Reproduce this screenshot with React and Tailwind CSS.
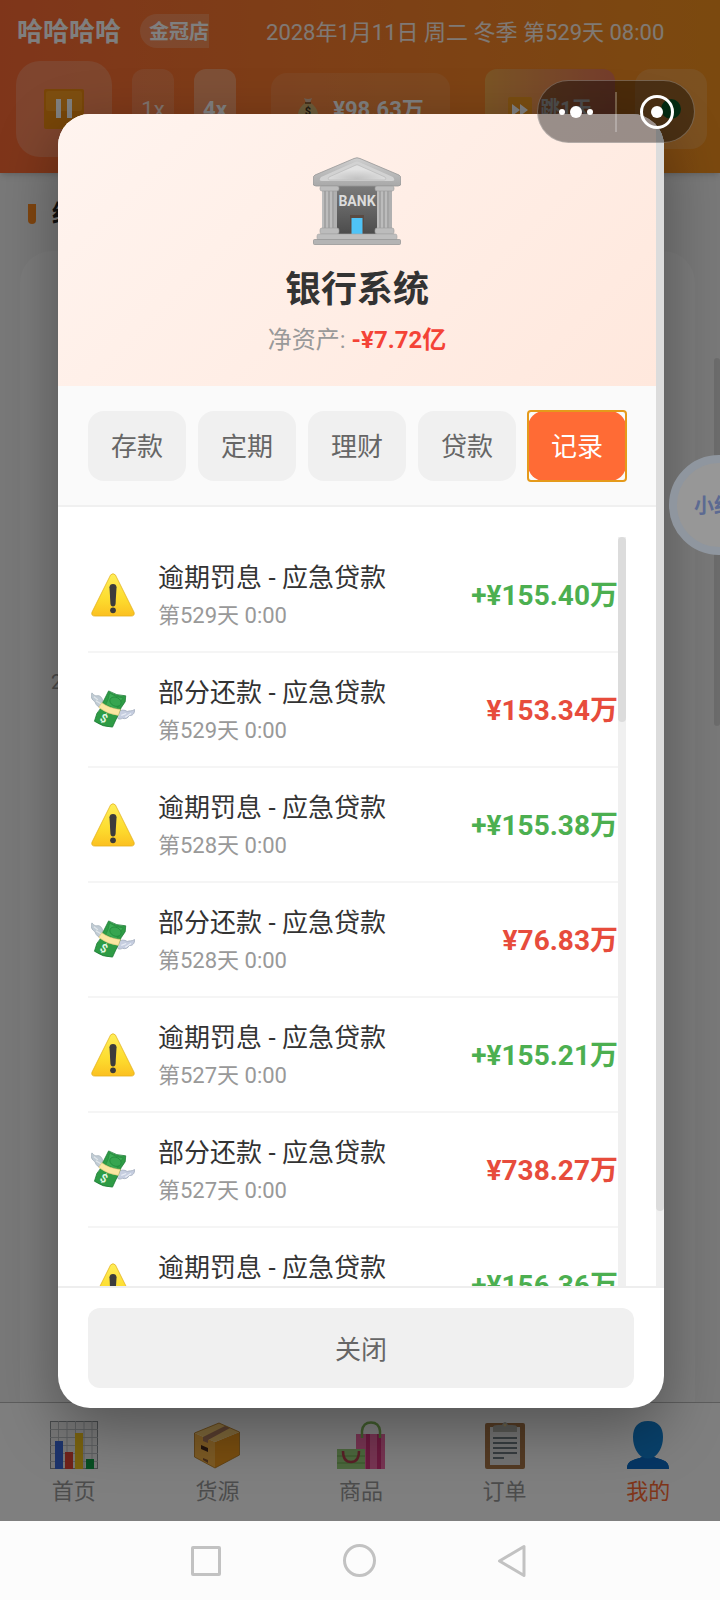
import { useState } from 'react'
import clsx from 'clsx'

const records = [
  { type: 'penalty', title: '逾期罚息 - 应急贷款', time: '第529天 0:00', amount: '+¥155.40万' },
  { type: 'repay', title: '部分还款 - 应急贷款', time: '第529天 0:00', amount: '¥153.34万' },
  { type: 'penalty', title: '逾期罚息 - 应急贷款', time: '第528天 0:00', amount: '+¥155.38万' },
  { type: 'repay', title: '部分还款 - 应急贷款', time: '第528天 0:00', amount: '¥76.83万' },
  { type: 'penalty', title: '逾期罚息 - 应急贷款', time: '第527天 0:00', amount: '+¥155.21万' },
  { type: 'repay', title: '部分还款 - 应急贷款', time: '第527天 0:00', amount: '¥738.27万' },
  { type: 'penalty', title: '逾期罚息 - 应急贷款', time: '第526天 0:00', amount: '+¥156.36万' },
]

const tabs = ['存款', '定期', '理财', '贷款', '记录']

function BankIcon() {
  return (
    <svg viewBox="0 0 88 88" className="w-[88px] h-[88px]" aria-hidden="true">
      <defs>
        <linearGradient id="roof" x1="0" y1="0" x2="0" y2="1">
          <stop offset="0" stopColor="#cfcfcf" />
          <stop offset="1" stopColor="#a9a9a9" />
        </linearGradient>
        <radialGradient id="pediment" cx="0.5" cy="0.9" r="0.6">
          <stop offset="0" stopColor="#c2c2c2" />
          <stop offset="1" stopColor="#e2e2e2" />
        </radialGradient>
        <linearGradient id="hall" x1="0" y1="0" x2="0" y2="1">
          <stop offset="0" stopColor="#7b7b7b" />
          <stop offset="1" stopColor="#4b4b4b" />
        </linearGradient>
      </defs>
      <rect x="16" y="28" width="56" height="50" fill="url(#hall)" />
      <path d="M41 1.500Q44 0 47 1.500L86 18Q88 19 88 22V26Q88 29 85 29H3Q0 29 0 26V22Q0 19 2 18Z" fill="url(#roof)" stroke="#979797" strokeWidth="0.8" />
      <path d="M42 5Q44 4 46 5L80 20Q83 24 79 24H9Q5 24 8 20Z" fill="#d2d2d2" />
      <path d="M43 8Q44 7.500 45 8L72 20Q74 23 71 23H17Q14 23 16 20Z" fill="url(#pediment)" stroke="#bdbdbd" strokeWidth="0.8" />
      {[9, 64].map((x) => (
        <g key={x}>
          <rect x={x} y="34" width="15" height="38" fill="#b0b0b0" />
          <path d={`M${x + 3} 34V72M${x + 7} 34V72M${x + 11} 34V72`} stroke="#989898" strokeWidth="1" />
          <path d={`M${x + 1} 34V72M${x + 5} 34V72M${x + 9} 34V72`} stroke="#c8c8c8" strokeWidth="1" />
          <rect x={x - 2} y="29" width="19" height="5" rx="2" fill="#bdbdbd" stroke="#9a9a9a" strokeWidth="0.6" />
          <rect x={x - 2} y="71" width="19" height="6" rx="2" fill="#bcbcbc" stroke="#9a9a9a" strokeWidth="0.6" />
        </g>
      ))}
      <rect x="37" y="58" width="14" height="20" fill="#5a4a42" />
      <rect x="38.500" y="61" width="11" height="16" fill="#4fc3f7" />
      <rect x="4" y="77" width="80" height="6" rx="2" fill="#bebebe" stroke="#a4a4a4" strokeWidth="0.6" />
      <rect x="0.500" y="82.500" width="87" height="5" rx="1" fill="#b4b4b4" stroke="#989898" strokeWidth="0.8" />
      <text x="44" y="49" textAnchor="middle" fontSize="14" fontWeight="700" fill="#dcdcdc">BANK</text>
    </svg>
  )
}

function WarningIcon() {
  return (
    <svg viewBox="1 1 46 46" className="w-11 h-11 mx-[3px] shrink-0" aria-hidden="true">
      <defs>
        <linearGradient id="warn" x1="0" y1="0" x2="0" y2="1">
          <stop offset="0" stopColor="#ffee58" />
          <stop offset="0.6" stopColor="#fddc2e" />
          <stop offset="1" stopColor="#fbc021" />
        </linearGradient>
      </defs>
      <path d="M21.500 3Q24 0.500 26.500 3L46 42Q47 46 43 46H5Q1 46 2 42Z" fill="url(#warn)" stroke="#e3b01c" strokeWidth="0.8" />
      <path d="M20.300 16Q20.500 12.500 24 12.500T27.700 16L26.700 33Q26.500 36 24 36T21.300 33Z" fill="#3c3c3c" />
      <circle cx="24" cy="40" r="3" fill="#3c3c3c" />
    </svg>
  )
}

function FlyingMoneyIcon() {
  return (
    <svg viewBox="2 0 45 45" className="w-11 h-11 mx-[3px] shrink-0" aria-hidden="true">
      <path d="M14 21C10 20 7 18 6 14C3 12 1 9 3 5C4 7 6 8 8 8C11 7 14 10 14 14C16 15 17 17 17 21Z" fill="#c0cbd4" stroke="#9daab4" strokeWidth="0.700" />
      <path d="M5 9 9 12M7 13 12 16" stroke="#e1e7eb" strokeWidth="1.200" fill="none" />
      <path d="M30 25C32 22 36 22 39 24C41 23 44 24 46.500 22C47 26 44 29 41 28C40 31 37 32 34 31C31 33 28 31 28 28Z" fill="#c6cee0" stroke="#98a4b5" strokeWidth="0.700" />
      <path d="M33 28 38 26M37 30 43 26" stroke="#e9edf5" strokeWidth="1.200" fill="none" />
      <path d="M20 3Q28 8 37.500 8L37 14Q32 20 30 27L24 40Q14 40 5.500 34L8 26Q12 22 14 15Z" fill="#2e9b45" stroke="#1b7a34" strokeWidth="0.800" />
      <path d="M21 5Q28 10 35 10Q30 16 28 22L17 17Q20 12 21 5Z" fill="#3cab54" stroke="#268d40" strokeWidth="0.800" />
      <ellipse cx="27" cy="14" rx="6" ry="4.500" transform="rotate(25 27 14)" fill="#37a550" stroke="#1f8a3b" strokeWidth="0.800" />
      <path d="M13 15Q21 21 32 22L30 28Q19 27 10 20Z" fill="#fbe6a2" stroke="#e2c878" strokeWidth="0.600" />
      <text x="15" y="35" textAnchor="middle" fontSize="12" fontWeight="700" fill="#e4f8e6" transform="rotate(28 15 31)">$</text>
    </svg>
  )
}

function ChartIcon() {
  return (
    <svg viewBox="0 0 48 48" className="w-12 h-12" aria-hidden="true">
      <rect x="0.500" y="0.500" width="47" height="47" fill="#eee" stroke="#8f9498" />
      <path d="M8.500 0V48M17 0V48M25.500 0V48M34 0V48M42 0V48M0 8.500H48M0 16.500H48M0 24.500H48M0 32.500H48M0 40.500H48" stroke="#b5babd" strokeWidth="0.900" />
      <rect x="5" y="20" width="8" height="28" fill="#3a68d8" />
      <rect x="15" y="31" width="8" height="17" fill="#e04535" />
      <rect x="25" y="12" width="8" height="36" fill="#f3c51f" />
      <rect x="36" y="38" width="8" height="10" fill="#0f9d45" />
    </svg>
  )
}

function PackageIcon() {
  return (
    <svg viewBox="0 0 48 48" className="w-12 h-12" aria-hidden="true">
      <path d="M1.500 12 22 21V47L1.500 36Z" fill="#f9b548" />
      <path d="M22 21 46.500 11V34L22 47Z" fill="#f09a1e" />
      <path d="M1.500 12 26 2 46.500 11 22 21Z" fill="#fbcc72" />
      <path d="M10 16 32 5 37 7 15 19V22L10 20Z" fill="#b07c5e" />
      <path d="M8 24 15 27V31L8 28Z" fill="#4a2b1d" />
      <path d="M10 37 15 39V42L10 39Z" fill="#8d5a34" />
      <path d="M1.500 12 26 2 46.500 11V34L22 47 1.500 36Z" fill="none" stroke="#b8781a" strokeWidth="0.800" />
    </svg>
  )
}

function BagsIcon() {
  return (
    <svg viewBox="0 0 48 48" className="w-12 h-12" aria-hidden="true">
      <rect x="19" y="13" width="29" height="35" fill="#f06aa6" />
      <path d="M31 13V48M42 13V48" stroke="#d6337c" strokeWidth="4" />
      <path d="M25 17V10Q26 1.500 34 1.500T43 10V17" fill="none" stroke="#82b95b" strokeWidth="2.500" />
      <rect x="0" y="28" width="28" height="20" fill="#9ad07c" />
      <path d="M0 35H28M0 42H28" stroke="#84be66" strokeWidth="2" />
      <path d="M6 30Q6 41 14 41T22 30" fill="none" stroke="#b5404f" strokeWidth="2.500" />
    </svg>
  )
}

function ClipboardIcon() {
  return (
    <svg viewBox="0 0 48 48" className="w-12 h-12" aria-hidden="true">
      <rect x="4" y="2" width="40" height="46" rx="2" fill="#a87648" />
      <rect x="9" y="6" width="30" height="38" fill="#e6e6e6" />
      <path d="M12 6Q12 4 17 4H21Q22 1 24 1T27 4H31Q36 4 36 6V11H12Z" fill="#b0b0a8" />
      <circle cx="24" cy="4" r="1.500" fill="#d8c088" />
      <path d="M12 17H36M12 22H36M12 27H36M12 32H36M12 37H23" stroke="#6f7a80" strokeWidth="2" />
    </svg>
  )
}

function PersonIcon() {
  return (
    <svg viewBox="0 0 48 48" className="w-12 h-12" aria-hidden="true">
      <path d="M24 0C34 0 39 6 39 16C39 27 34 33 30 36C36 39 45 38 45 48H3C3 38 12 39 18 36C14 33 9 27 9 16C9 6 14 0 24 0Z" fill="#1080d4" />
      <path d="M18 36Q24 39 30 36C36 39 45 38 45 48H3C3 38 12 39 18 36Z" fill="#0c6cc8" />
    </svg>
  )
}

function PauseIcon() {
  return (
    <svg viewBox="0 0 40 40" className="w-10 h-10" aria-hidden="true">
      <rect width="40" height="40" rx="2" fill="#f08c10" />
      <rect x="2" y="2" width="36" height="20" rx="2" fill="#fb9c20" />
      <path d="M12 10h5v19h-5zM23 10h5v19h-5z" fill="#fff" />
    </svg>
  )
}

function MoneyBagIcon() {
  return (
    <svg viewBox="0 0 22 24" className="w-[22px] h-6" aria-hidden="true">
      <path d="M7 1Q11 3 15 1L13 6H9Z" fill="#e0c0a8" />
      <path d="M8 6h6c5 4 7 8 7 12 0 3-2 5-5 5H6c-3 0-5-2-5-5 0-4 2-8 7-12Z" fill="#d9b875" />
      <path d="M8 6h6" stroke="#7a4c22" strokeWidth="1.500" />
      <text x="11" y="18" textAnchor="middle" fontSize="11" fontWeight="700" fill="#40301c">$</text>
    </svg>
  )
}

function Scrollbar({ thumb }) {
  return (
    <div className="w-2 shrink-0 bg-[#f0f0f0]">
      <div className={clsx('rounded-b bg-[#dcdcdc]', thumb)} />
    </div>
  )
}

const navItems = [
  { label: '首页', Icon: ChartIcon },
  { label: '货源', Icon: PackageIcon },
  { label: '商品', Icon: BagsIcon },
  { label: '订单', Icon: ClipboardIcon },
  { label: '我的', Icon: PersonIcon, active: true },
]

function ShopPage() {
  return (
    <div className="flex-1 min-h-0 flex flex-col bg-[#f2f2f2]">
      <header className="bg-linear-to-r from-[#ff6b35] to-[#f7931e] pt-[14px] pb-4 shadow-md">
        <div className="flex items-center h-[34px] pl-[17px] text-white">
          <h1 className="pt-[2px] text-[26px] font-bold">哈哈哈哈</h1>
          <span className="ml-[19px] w-[69px] h-[34px] pl-[9px] rounded-l-full bg-white/20 text-[20px] leading-[36px] font-bold whitespace-nowrap">
            金冠店
          </span>
          <span className="ml-[57px] pt-[2px] text-[22px] text-white/90 whitespace-nowrap">2028年1月11日 周二 冬季 第529天 08:00</span>
        </div>
        <div className="flex items-center justify-between mt-[13px] pl-4 pr-[13px] text-white text-[22px]">
          <div className="flex items-center gap-5">
            <button aria-label="暂停" className="w-24 h-24 rounded-3xl bg-white/20 flex items-center justify-center">
              <PauseIcon />
            </button>
            <button className="w-[42px] h-20 rounded-xl bg-white/15 text-white/80">1x</button>
            <button className="w-[42px] h-20 rounded-xl bg-white/30 font-bold">4x</button>
          </div>
          <div className="w-[179px] h-[72px] rounded-2xl bg-white/10 flex items-center justify-center gap-[14px] font-bold">
            <MoneyBagIcon />
            ¥98.63万
          </div>
          <div className="flex items-center gap-5">
            <button className="w-[130px] h-20 rounded-xl bg-linear-to-r from-[#f5a84a] to-[#ea7a58] text-[20px] font-bold flex items-center justify-center gap-2">
              <svg viewBox="0 0 24 24" className="w-6 h-6" aria-hidden="true">
                <rect width="24" height="24" rx="2" fill="#f39a20" />
                <path d="M4 7l8 6-8 6zM12 7l8 6-8 6z" fill="#fff" />
              </svg>
              跳1天
            </button>
            <button aria-label="在线" className="w-[72px] h-20 rounded-2xl bg-white/15 flex items-center justify-center">
              <span className="w-5 h-5 rounded-full bg-[#0a8f3c]" />
            </button>
          </div>
        </div>
      </header>

      <main className="flex-1 min-h-0 flex flex-col px-5">
        <h2 className="flex items-center gap-4 h-[78px] pt-1 pl-2 text-[24px] font-bold text-[#222]">
          <span className="w-2 h-5 rounded-b-full bg-[#ff8a1e]" />
          经
        </h2>
        <section className="flex-1 mr-[5px] rounded-t-[32px] bg-[#f8f8f8] pt-[416px] pl-[31px] text-[20px] text-[#999]">2</section>
      </main>

      <nav className="grid grid-cols-5 h-[119px] pl-[2px] border-t border-[#bbb] bg-white text-[22px]">
        {navItems.map(({ label, Icon, active }) => (
          <a key={label} href="#" className={clsx('flex flex-col items-center gap-[5px] pt-[18px]', active ? 'text-[#ff6b35]' : 'text-[#999]')}>
            <Icon />
            <span className="leading-9">{label}</span>
          </a>
        ))}
      </nav>
    </div>
  )
}

function BankModal() {
  const [tab, setTab] = useState('记录')

  return (
    <div role="dialog" aria-label="银行系统" className="flex-1 min-w-0 flex flex-col rounded-[32px] overflow-hidden bg-white shadow-[0_20px_60px_rgba(0,0,0,0.35)]">
      <div className="flex-1 min-h-0 flex">
        <div className="flex-1 min-w-0 flex flex-col">
          <div className="h-[272px] shrink-0 flex flex-col items-center pt-[43px] bg-linear-135 from-[#fff4ef] to-[#ffe8dd]">
            <BankIcon />
            <h2 className="mt-[21px] text-[36px] leading-12 font-bold text-[#333]">银行系统</h2>
            <p className="mt-2 text-[24px] leading-9 text-[#999]">
              净资产: <strong className="font-bold text-[#f44336]">-¥7.72亿</strong>
            </p>
          </div>

          <div className="shrink-0 flex gap-3 px-[30px] pt-[25px] pb-6 bg-[#fafafa] border-b-2 border-[#f0f0f0]">
            {tabs.map((t) => (
              <button
                key={t}
                onClick={() => setTab(t)}
                className={clsx(
                  'flex-1 h-[70px] pt-[3px] rounded-[16px] text-[26px]',
                  t === tab
                    ? 'relative bg-[#ff6b35] text-white before:absolute before:-inset-px before:border-2 before:border-[#e59a1b] before:rounded-sm'
                    : 'bg-[#f0f0f0] text-[#666]',
                )}
              >
                {t}
              </button>
            ))}
          </div>

          <div className="flex-1 min-h-0 flex px-[30px] pt-[30px]">
            <ul className="flex-1 min-w-0 pt-px overflow-hidden">
              {records.map((r, i) => (
                <li key={i} className="flex items-center h-[115px] border-b-2 border-[#f5f5f5]">
                  {r.type === 'penalty' ? <WarningIcon /> : <FlyingMoneyIcon />}
                  <div className="flex-1 min-w-0 ml-5 pt-[3px]">
                    <p className="text-[26px] leading-9 text-[#333]">{r.title}</p>
                    <p className="mt-1 text-[22px] leading-8 text-[#999]">{r.time}</p>
                  </div>
                  <span className={clsx('pt-[3px] text-[28px] font-bold', r.type === 'penalty' ? 'text-[#4caf50]' : 'text-[#e74c3c]')}>
                    {r.amount}
                  </span>
                </li>
              ))}
            </ul>
            <Scrollbar thumb="h-[185px] rounded-t" />
          </div>
        </div>
        <Scrollbar thumb="h-[1097px]" />
      </div>

      <div className="shrink-0 px-[30px] py-5 border-t-2 border-[#eee]">
        <button className="w-full h-20 pt-[5px] rounded-xl bg-[#f0f0f0] text-[26px] text-[#666]">关闭</button>
      </div>
    </div>
  )
}

export default function App() {
  return (
    <div className="relative h-screen flex flex-col overflow-hidden font-[Roboto,'Noto_Sans_CJK_SC',sans-serif]">
      <div className="relative flex-1 min-h-0 flex flex-col">
        <ShopPage />

        {/* page scroll position */}
        <div className="absolute right-0 top-[358px] w-[6px] h-[368px] rounded-full bg-black/10" />

        <div className="absolute inset-0 flex pt-[114px] pb-[113px] pl-[58px] pr-[56px] bg-black/50">
          <BankModal />
        </div>

        {/* floating assistant */}
        <button className="absolute -right-[49px] top-[455px] w-[100px] h-[100px] rounded-full border-8 border-[#8f969f] bg-[#979797] pl-[17px] pt-[2px] text-left text-[20px] font-bold text-[#5c6a92] whitespace-nowrap">
          小红
        </button>

        {/* mini-program capsule */}
        <div className="absolute right-[25px] top-[80px] w-[158px] h-[63px] flex items-center rounded-full border border-white/25 bg-black/40">
          <button aria-label="更多" className="flex-1 flex items-center justify-center gap-[5px] pr-[2px]">
            <span className="w-[6px] h-[6px] rounded-full bg-white" />
            <span className="w-3 h-3 rounded-full bg-white" />
            <span className="w-[6px] h-[6px] rounded-full bg-white" />
          </button>
          <span className="w-[2px] h-10 bg-white/25" />
          <button aria-label="关闭小程序" className="flex-1 flex items-center justify-center pl-[2px]">
            <span className="w-[34px] h-[34px] rounded-full border-3 border-white flex items-center justify-center">
              <span className="w-3 h-3 rounded-full bg-white" />
            </span>
          </button>
        </div>
      </div>

      {/* system navigation */}
      <div className="h-[79px] shrink-0 flex items-center justify-center pr-[2px] bg-[#fcfcfc]">
        <button aria-label="最近任务" className="w-[153px] flex justify-center">
          <span className="w-[30px] h-[30px] rounded-xs border-3 border-[#c2c2c2]" />
        </button>
        <button aria-label="主屏幕" className="w-[153px] flex justify-center">
          <span className="w-[33px] h-[33px] rounded-full border-3 border-[#c2c2c2]" />
        </button>
        <button aria-label="返回" className="w-[153px] flex justify-center">
          <svg viewBox="0 0 30 34" className="w-[30px] h-[34px]" aria-hidden="true">
            <path d="M27 2.500V31.500L2.500 17Z" fill="none" stroke="#c2c2c2" strokeWidth="3" strokeLinejoin="round" />
          </svg>
        </button>
      </div>
    </div>
  )
}
